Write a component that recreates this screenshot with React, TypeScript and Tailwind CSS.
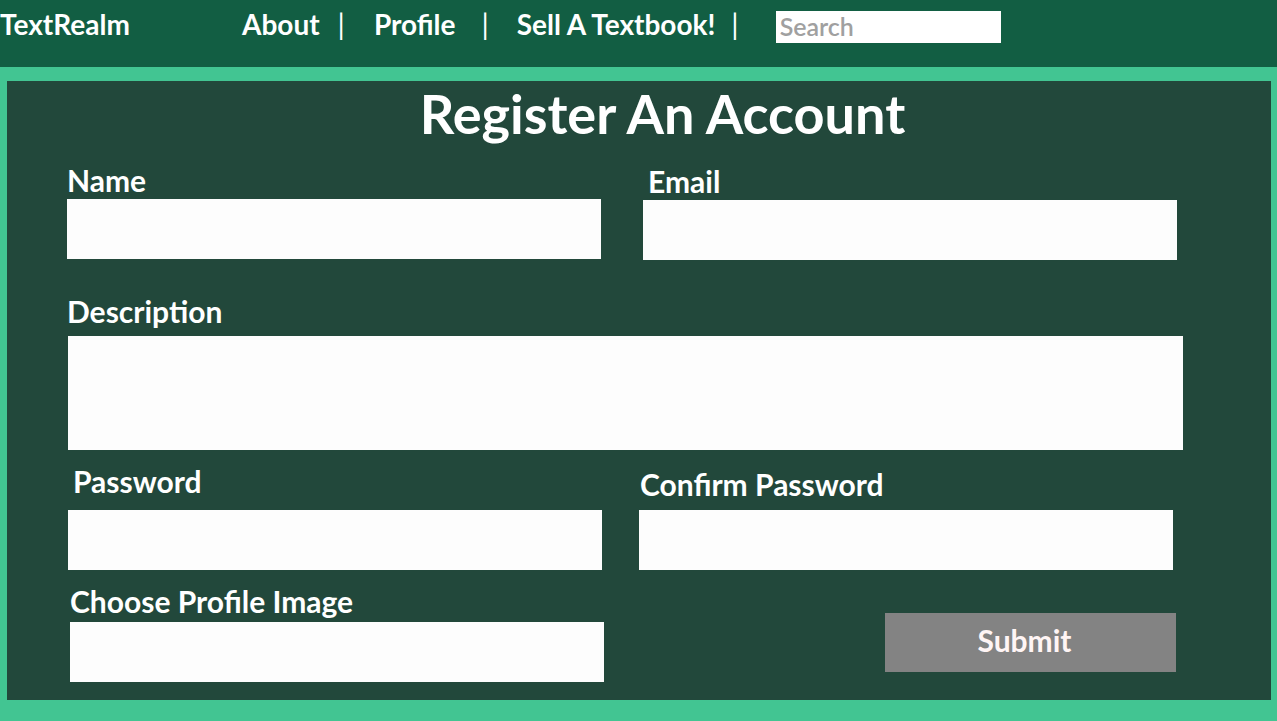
import React from "react";

const font = { fontFamily: "Lato, 'Open Sans', sans-serif" };

export default function App() {
  return (
    <div className="w-[1277px] h-[721px] bg-[#42c592] flex flex-col overflow-hidden text-white font-bold" style={font}>
      <nav className="h-[67px] shrink-0 bg-[#125e43] flex items-start text-[28px] leading-none">
        <span className="mt-[10px] w-[242px]">TextRealm</span>
        <span className="mt-[10px]">About</span>
        <span className="mt-[9px] ml-[18px] font-normal text-[29px]">|</span>
        <span className="mt-[10px] ml-[29px]">Profile</span>
        <span className="mt-[9px] ml-[26px] font-normal text-[29px]">|</span>
        <span className="mt-[10px] ml-[28px]">Sell A Textbook!</span>
        <span className="mt-[9px] ml-[16px] font-normal text-[29px]">|</span>
        <div className="mt-[11px] ml-[37px] w-[225px] h-[32px] bg-white flex items-start pt-[2px] pl-[4px]">
          <span className="text-[25px] leading-[26px] text-[#a0a0a0] font-semibold">Search</span>
        </div>
      </nav>
      <div className="mt-[14px] ml-[7px] w-[1264px] h-[619px] shrink-0 bg-[#22483b] flex flex-col">
        <h1 className="pt-[6px] pl-[47px] text-center text-[54px] leading-none font-bold">Register An Account</h1>

        <div className="mt-[24px] flex items-start">
          <div className="ml-[60px] w-[534px] flex flex-col">
            <label className="text-[30px] leading-none">Name</label>
            <div className="mt-[4px] h-[60px] bg-[#fdfdfd]" />
          </div>
          <div className="ml-[42px] mt-[1px] w-[534px] flex flex-col">
            <label className="pl-[5px] text-[30px] leading-none">Email</label>
            <div className="mt-[4px] h-[60px] bg-[#fdfdfd]" />
          </div>
        </div>

        <div className="mt-[36px] ml-[60px] flex flex-col">
          <label className="text-[30px] leading-none">Description</label>
          <div className="mt-[10px] ml-[1px] w-[1115px] h-[114px] bg-[#fdfdfd]" />
        </div>

        <div className="mt-[16px] flex items-start">
          <div className="ml-[61px] w-[534px] flex flex-col">
            <label className="pl-[5px] text-[30px] leading-none">Password</label>
            <div className="mt-[14px] h-[60px] bg-[#fdfdfd]" />
          </div>
          <div className="ml-[37px] mt-[3px] w-[534px] flex flex-col">
            <label className="pl-[1px] text-[30px] leading-none">Confirm Password</label>
            <div className="mt-[11px] h-[60px] bg-[#fdfdfd]" />
          </div>
        </div>

        <div className="mt-[16px] flex items-start">
          <div className="ml-[63px] w-[534px] flex flex-col">
            <label className="text-[30px] leading-none">Choose Profile Image</label>
            <div className="mt-[6px] h-[60px] bg-[#fdfdfd]" />
          </div>
          <button className="ml-[281px] mt-[27px] w-[291px] h-[59px] pr-[12px] pb-[6px] bg-[#838383] text-[#fff5f5] text-[30px] leading-none font-bold">
            Submit
          </button>
        </div>
      </div>
    </div>
  );
}
